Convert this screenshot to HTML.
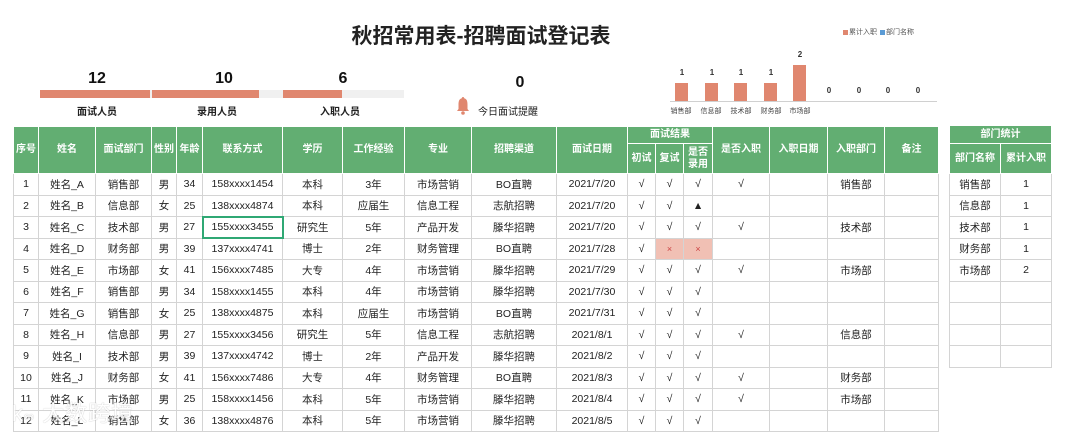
<!DOCTYPE html>
<html><head><meta charset="utf-8"><style>
*{margin:0;padding:0;box-sizing:border-box}
body{width:1080px;height:433px;overflow:hidden;background:#fff;font-family:"Liberation Sans","Noto Sans CJK SC",sans-serif;position:relative;color:#222}
.a{position:absolute}
.t{font-size:21px;font-weight:bold;left:0;width:962px;text-align:center;top:20px;color:#222}
.num{font-size:16px;font-weight:bold;text-align:center;color:#111}
.lab{font-size:10px;font-weight:bold;text-align:center;color:#222}
.bar{height:8px;top:90px}
table{border-collapse:collapse;position:absolute;table-layout:fixed}
td{border:1px solid #d4d4d4;text-align:center;font-size:10.5px;height:21.5px;padding:0;white-space:nowrap;overflow:hidden}
th{background:#62ae72;color:#fff;border:1px solid #fff;font-size:10px;font-weight:bold;padding:0;line-height:12px}
.pk{background:#f1c0b4;color:#c44;font-size:9px}
.cl{font-size:7px;color:#444;text-align:center;width:30px}
.v{font-size:8px;font-weight:bold;color:#333;text-align:center;width:20px}
.cb{background:#e0876f;width:13px}
</style></head><body>
<div class="a t">秋招常用表-招聘面试登记表</div>

<div class="a bar" style="left:40px;width:364px;background:#f0f0f0"></div>
<div class="a bar" style="left:40px;width:110px;background:#e0876f"></div>
<div class="a bar" style="left:152px;width:107px;background:#e0876f"></div>
<div class="a bar" style="left:283px;width:59px;background:#e0876f"></div>
<div class="a num" style="left:67px;width:60px;top:70px">12</div>
<div class="a num" style="left:194px;width:60px;top:70px">10</div>
<div class="a num" style="left:313px;width:60px;top:70px">6</div>
<div class="a lab" style="left:62px;width:70px;top:103px">面试人员</div>
<div class="a lab" style="left:182px;width:70px;top:103px">录用人员</div>
<div class="a lab" style="left:305px;width:70px;top:103px">入职人员</div>
<div class="a num" style="left:500px;width:40px;top:74px">0</div>
<svg class="a" style="left:456px;top:96px" width="14" height="20" viewBox="0 0 14 20"><path d="M7 1c1 0 1.2.8 1.2 1.3C11 3 11.5 5.5 11.5 9v4l1.5 2H1l1.5-2V9C2.5 5.5 3 3 5.8 2.3 5.8 1.8 6 1 7 1z" fill="#e0876f"/><circle cx="7" cy="17" r="1.8" fill="#e0876f"/></svg>
<div class="a" style="left:478px;top:103px;font-size:10px">今日面试提醒</div>

<div class="a" style="left:843px;top:30px;width:5px;height:5px;background:#e0876f"></div>
<div class="a" style="left:849px;top:27px;font-size:7px;color:#555">累计入职</div>
<div class="a" style="left:880px;top:30px;width:5px;height:5px;background:#5b9bd5"></div>
<div class="a" style="left:886px;top:27px;font-size:7px;color:#555">部门名称</div>
<div class="a" style="left:670px;top:101px;width:267px;height:1px;background:#d0d0d0"></div>
<div class="a cb" style="left:675px;top:83px;height:18px"></div>
<div class="a cb" style="left:705px;top:83px;height:18px"></div>
<div class="a cb" style="left:734px;top:83px;height:18px"></div>
<div class="a cb" style="left:764px;top:83px;height:18px"></div>
<div class="a cb" style="left:793px;top:65px;height:36px"></div>
<div class="a v" style="left:672px;top:68px">1</div>
<div class="a v" style="left:702px;top:68px">1</div>
<div class="a v" style="left:731px;top:68px">1</div>
<div class="a v" style="left:761px;top:68px">1</div>
<div class="a v" style="left:790px;top:50px">2</div>
<div class="a v" style="left:819px;top:86px">0</div>
<div class="a v" style="left:849px;top:86px">0</div>
<div class="a v" style="left:878px;top:86px">0</div>
<div class="a v" style="left:908px;top:86px">0</div>
<div class="a cl" style="left:666px;top:106px">销售部</div>
<div class="a cl" style="left:696px;top:106px">信息部</div>
<div class="a cl" style="left:726px;top:106px">技术部</div>
<div class="a cl" style="left:756px;top:106px">财务部</div>
<div class="a cl" style="left:785px;top:106px">市场部</div>

<table style="left:13px;top:126px;width:925px">
<colgroup><col style="width:25px"><col style="width:57px"><col style="width:56px"><col style="width:25px"><col style="width:26px"><col style="width:80px"><col style="width:60px"><col style="width:62px"><col style="width:67px"><col style="width:85px"><col style="width:71px"><col style="width:28px"><col style="width:28px"><col style="width:29px"><col style="width:57px"><col style="width:58px"><col style="width:57px"><col style="width:54px"></colgroup>
<tr style="height:17px"><th rowspan="2">序号</th><th rowspan="2">姓名</th><th rowspan="2">面试部门</th><th rowspan="2">性别</th><th rowspan="2">年龄</th><th rowspan="2">联系方式</th><th rowspan="2">学历</th><th rowspan="2">工作经验</th><th rowspan="2">专业</th><th rowspan="2">招聘渠道</th><th rowspan="2">面试日期</th><th colspan="3">面试结果</th><th rowspan="2">是否入职</th><th rowspan="2">入职日期</th><th rowspan="2">入职部门</th><th rowspan="2">备注</th></tr>
<tr style="height:30px"><th>初试</th><th>复试</th><th>是否<br>录用</th></tr>
<tr><td>1</td><td>姓名_A</td><td>销售部</td><td>男</td><td>34</td><td>158xxxx1454</td><td>本科</td><td>3年</td><td>市场营销</td><td>BO直聘</td><td>2021/7/20</td><td>√</td><td>√</td><td>√</td><td>√</td><td></td><td>销售部</td><td></td></tr>
<tr><td>2</td><td>姓名_B</td><td>信息部</td><td>女</td><td>25</td><td>138xxxx4874</td><td>本科</td><td>应届生</td><td>信息工程</td><td>志航招聘</td><td>2021/7/20</td><td>√</td><td>√</td><td>▲</td><td></td><td></td><td></td><td></td></tr>
<tr><td>3</td><td>姓名_C</td><td>技术部</td><td>男</td><td>27</td><td style="border:2px solid #2fa874">155xxxx3455</td><td>研究生</td><td>5年</td><td>产品开发</td><td>滕华招聘</td><td>2021/7/20</td><td>√</td><td>√</td><td>√</td><td>√</td><td></td><td>技术部</td><td></td></tr>
<tr><td>4</td><td>姓名_D</td><td>财务部</td><td>男</td><td>39</td><td>137xxxx4741</td><td>博士</td><td>2年</td><td>财务管理</td><td>BO直聘</td><td>2021/7/28</td><td>√</td><td class="pk">×</td><td class="pk">×</td><td></td><td></td><td></td><td></td></tr>
<tr><td>5</td><td>姓名_E</td><td>市场部</td><td>女</td><td>41</td><td>156xxxx7485</td><td>大专</td><td>4年</td><td>市场营销</td><td>滕华招聘</td><td>2021/7/29</td><td>√</td><td>√</td><td>√</td><td>√</td><td></td><td>市场部</td><td></td></tr>
<tr><td>6</td><td>姓名_F</td><td>销售部</td><td>男</td><td>34</td><td>158xxxx1455</td><td>本科</td><td>4年</td><td>市场营销</td><td>滕华招聘</td><td>2021/7/30</td><td>√</td><td>√</td><td>√</td><td></td><td></td><td></td><td></td></tr>
<tr><td>7</td><td>姓名_G</td><td>销售部</td><td>女</td><td>25</td><td>138xxxx4875</td><td>本科</td><td>应届生</td><td>市场营销</td><td>BO直聘</td><td>2021/7/31</td><td>√</td><td>√</td><td>√</td><td></td><td></td><td></td><td></td></tr>
<tr><td>8</td><td>姓名_H</td><td>信息部</td><td>男</td><td>27</td><td>155xxxx3456</td><td>研究生</td><td>5年</td><td>信息工程</td><td>志航招聘</td><td>2021/8/1</td><td>√</td><td>√</td><td>√</td><td>√</td><td></td><td>信息部</td><td></td></tr>
<tr><td>9</td><td>姓名_I</td><td>技术部</td><td>男</td><td>39</td><td>137xxxx4742</td><td>博士</td><td>2年</td><td>产品开发</td><td>滕华招聘</td><td>2021/8/2</td><td>√</td><td>√</td><td>√</td><td></td><td></td><td></td><td></td></tr>
<tr><td>10</td><td>姓名_J</td><td>财务部</td><td>女</td><td>41</td><td>156xxxx7486</td><td>大专</td><td>4年</td><td>财务管理</td><td>BO直聘</td><td>2021/8/3</td><td>√</td><td>√</td><td>√</td><td>√</td><td></td><td>财务部</td><td></td></tr>
<tr><td>11</td><td>姓名_K</td><td>市场部</td><td>男</td><td>25</td><td>158xxxx1456</td><td>本科</td><td>5年</td><td>市场营销</td><td>滕华招聘</td><td>2021/8/4</td><td>√</td><td>√</td><td>√</td><td>√</td><td></td><td>市场部</td><td></td></tr>
<tr><td>12</td><td>姓名_L</td><td>销售部</td><td>女</td><td>36</td><td>138xxxx4876</td><td>本科</td><td>5年</td><td>市场营销</td><td>滕华招聘</td><td>2021/8/5</td><td>√</td><td>√</td><td>√</td><td></td><td></td><td></td><td></td></tr>
</table>

<table style="left:949px;top:125px;width:102px">
<colgroup><col style="width:51px"><col style="width:51px"></colgroup>
<tr style="height:18px"><th colspan="2">部门统计</th></tr>
<tr style="height:30px"><th>部门名称</th><th>累计入职</th></tr>
<tr><td>销售部</td><td>1</td></tr>
<tr><td>信息部</td><td>1</td></tr>
<tr><td>技术部</td><td>1</td></tr>
<tr><td>财务部</td><td>1</td></tr>
<tr><td>市场部</td><td>2</td></tr>
<tr><td></td><td></td></tr>
<tr><td></td><td></td></tr>
<tr><td></td><td></td></tr>
<tr><td></td><td></td></tr>
</table>

<div class="a" style="left:12px;top:396px;font-size:22px;color:#fff;opacity:.85;text-shadow:0 0 1px #999;letter-spacing:1px">k<span style="font-size:14px">∞</span> 大数跨境</div>
</body></html>
